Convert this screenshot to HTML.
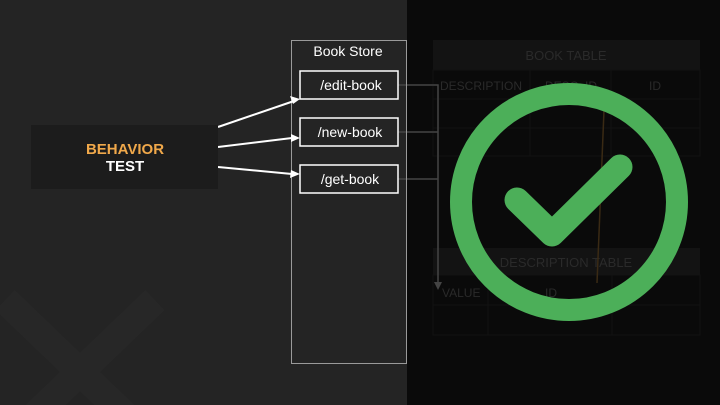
<!DOCTYPE html>
<html><head><meta charset="utf-8"><style>
html,body{margin:0;padding:0}
body{width:720px;height:405px;background:#242424;position:relative;overflow:hidden;font-family:"Liberation Sans",sans-serif}
.abs{position:absolute}
</style></head><body>
<div class="abs" style="left:407px;top:0;width:313px;height:405px;background:#0a0a0a"></div>
<svg class="abs" style="left:0;top:0" width="720" height="405">
  <!-- faint X -->
  <path d="M5 300 L130 420 M155 300 L30 420" stroke="#272727" stroke-width="28" fill="none"/>
  <!-- book table -->
  <rect x="433" y="40" width="267" height="30" fill="#131313"/>
  <text x="566" y="60" fill="#2a2a2a" font-size="13" text-anchor="middle" font-family="Liberation Sans">BOOK TABLE</text>
  <g stroke="#121212" fill="none">
    <rect x="433" y="70" width="267" height="86"/>
    <line x1="433" y1="99" x2="700" y2="99"/><line x1="433" y1="128" x2="700" y2="128"/>
    <line x1="530" y1="70" x2="530" y2="156"/><line x1="611" y1="70" x2="611" y2="156"/>
    <rect x="433" y="275" width="267" height="60"/>
    <line x1="433" y1="305" x2="700" y2="305"/><line x1="488" y1="275" x2="488" y2="335"/><line x1="612" y1="275" x2="612" y2="335"/>
  </g>
  <text x="440" y="90" fill="#2a2a2a" font-size="12" font-family="Liberation Sans">DESCRIPTION</text>
  <text x="545" y="90" fill="#2a2a2a" font-size="12" font-family="Liberation Sans">DESC_ID</text>
  <text x="655" y="90" fill="#2a2a2a" font-size="12" text-anchor="middle" font-family="Liberation Sans">ID</text>
  <rect x="433" y="248" width="267" height="27" fill="#131313"/>
  <text x="566" y="267" fill="#2a2a2a" font-size="13" text-anchor="middle" font-family="Liberation Sans">DESCRIPTION TABLE</text>
  <text x="442" y="297" fill="#2a2a2a" font-size="12" font-family="Liberation Sans">VALUE</text>
  <text x="545" y="297" fill="#2a2a2a" font-size="12" font-family="Liberation Sans">ID</text>
  <line x1="604" y1="110" x2="597" y2="283" stroke="#3a2a14" stroke-width="1.5"/>
  <!-- connectors -->
  <g stroke="#444" stroke-width="1.5" fill="none">
    <path d="M398 85 H438 V288 M398 132 H438 M398 179 H438"/>
  </g>
  <path d="M434 282 L438 290 L442 282Z" fill="#444"/>
  <!-- book store -->
  <rect x="291.5" y="40.5" width="115" height="323" fill="none" stroke="#9a9a9a"/>
  <text x="348" y="56" fill="#fff" font-size="14" text-anchor="middle" font-family="Liberation Sans">Book Store</text>
  <g stroke="#fff" stroke-width="1.5" fill="#242424">
    <rect x="300" y="71" width="98" height="28"/>
    <rect x="300" y="118" width="98" height="28"/>
    <rect x="300" y="165" width="98" height="28"/>
  </g>
  <g fill="#fff" font-size="14" text-anchor="middle" font-family="Liberation Sans">
    <text x="351" y="90">/edit-book</text>
    <text x="350" y="137">/new-book</text>
    <text x="350" y="184">/get-book</text>
  </g>
  <!-- arrows -->
  <g stroke="#fff" stroke-width="2" fill="none">
    <path d="M218 127 L294 101"/><path d="M218 147 L292 138"/><path d="M218 167 L292 174"/>
  </g>
  <g fill="#fff">
    <path d="M300 99 L290 96 L293 104Z"/>
    <path d="M300 138 L291 134 L291 142Z"/>
    <path d="M300 174 L291 170 L290 178Z"/>
  </g>
  <!-- behavior -->
  <rect x="31" y="125" width="187" height="64" fill="#1c1c1c"/>
  <text x="125" y="154" fill="#f0a84a" font-size="15" font-weight="bold" text-anchor="middle" font-family="Liberation Sans">BEHAVIOR</text>
  <text x="125" y="171" fill="#fff" font-size="15" font-weight="bold" text-anchor="middle" font-family="Liberation Sans">TEST</text>
  <!-- check circle -->
  <circle cx="569" cy="202" r="108" fill="none" stroke="#4caf59" stroke-width="22"/>
  <path d="M517 200 L552 234 L620 167" fill="none" stroke="#4caf59" stroke-width="25" stroke-linecap="round" stroke-linejoin="round"/>
</svg>
</body></html>
